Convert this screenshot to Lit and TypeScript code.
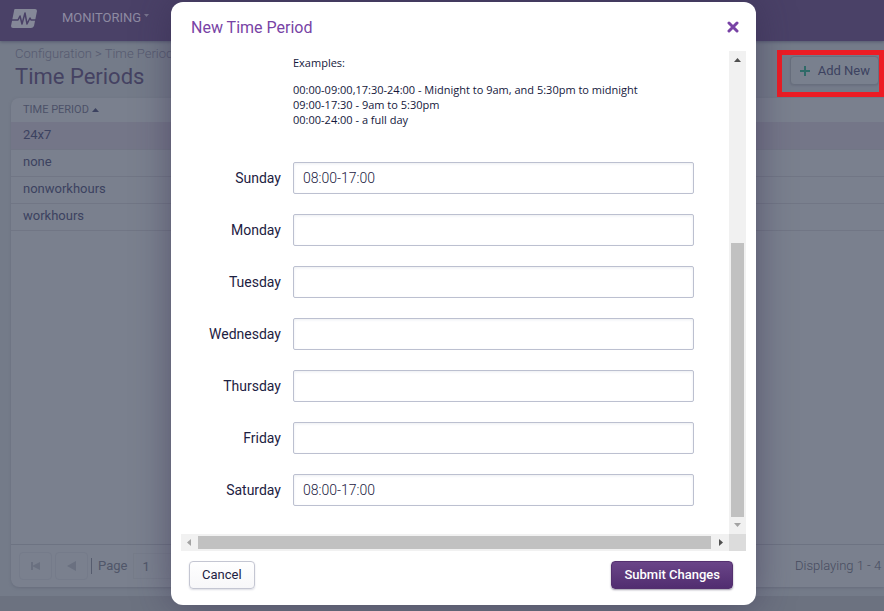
import { LitElement, html, css } from "lit";
import { customElement, state } from "lit/decorators.js";

@customElement("periods-page")
class PeriodsPage extends LitElement {
  static styles = css`
    :host {
      display: flex;
      flex-direction: column;
      min-height: 100vh;
      overflow: hidden;
      background: #6c7280;
      color: #3c4260;
      font: 13px/16px Roboto, sans-serif;
    }
    * { box-sizing: border-box; }
    button { font: inherit; color: inherit; }
    .bar {
      display: flex;
      align-items: center;
      gap: 24px;
      height: 41px;
      padding: 0 10px 4px;
      background: #4a4167;
      box-shadow: 0 1px 3px #555b70;
      z-index: 1;
    }
    .logo { display: block; width: 28px; height: 20px; }
    .menu {
      display: flex;
      gap: 3px;
      color: #8e8ba2;
      text-decoration: none;
      line-height: 18px;
      height: 20px;
    }
    .menu svg { margin-top: 4px; }
    .main {
      flex: 1;
      display: flex;
      flex-direction: column;
      padding: 4px 0 9px 11px;
      margin-bottom: 15px;
      background: #747b89;
    }
    .head { display: flex; justify-content: space-between; height: 53px; }
    .crumbs { padding-left: 4px; line-height: 18px; font-weight: 300; color: #565a70; }
    .crumbs a { color: inherit; text-decoration: none; }
    h1 { margin: 0; padding-left: 4px; font-size: 22px; line-height: 28px; font-weight: 400; color: #454262; }
    .tools { position: relative; align-self: flex-start; padding: 11px 5px 12px 13px; }
    .tools::after {
      content: "";
      position: absolute;
      inset: 5px 0 0;
      border: 5px solid #ed1c24;
    }
    .add {
      display: flex;
      align-items: center;
      gap: 7px;
      height: 29px;
      padding: 0 8px;
      border: 1px solid #686f7e;
      border-radius: 4px;
      background: #79808e;
      box-shadow: 0 1px 2px #6a7080;
    }
    .grid {
      flex: 1;
      display: flex;
      flex-direction: column;
      border-radius: 8px 0 0 8px;
      background: #7a808e;
      box-shadow: 0 1px 3px #676d7c;
    }
    table { width: 100%; border-collapse: collapse; }
    th { height: 24px; padding: 0 12px; text-align: left; font-size: 11px; font-weight: 400; color: #4c5168; }
    th svg { margin-left: 3px; vertical-align: 1px; }
    td { height: 27px; padding: 0 12px 1px; border-bottom: 1px solid #717685; }
    tr.on td { background: #747688; }
    .pager {
      display: flex;
      align-items: center;
      gap: 3px;
      height: 43px;
      margin-top: auto;
      padding-left: 8px;
      border-top: 1px solid #6d7382;
      font-size: 13px;
      color: #505669;
    }
    .step {
      display: grid;
      place-items: center;
      width: 33px;
      height: 28px;
      padding: 0;
      border: 1px solid #757b8a;
      border-radius: 4px;
      background: none;
    }
    .page { padding: 0 3px 0 6px; border-left: 1px solid #565c6e; }
    .num {
      width: 40px;
      height: 26px;
      padding: 0 8px;
      border: 1px solid #767c8a;
      background: none;
      font: inherit;
      color: inherit;
    }
    .count { width: 89px; margin-left: auto; white-space: nowrap; font-weight: 300; overflow: hidden; color: #474c60; }
  `;
  private rows = ["24x7", "none", "nonworkhours", "workhours"];
  render() {
    return html`
      <header class="bar">
        <svg class="logo" viewBox="0 0 28 20">
          <path d="M5 0h20q2 0 2 2l-3 15q-1 2-3 2H3q-2 0-2-2L4 2q0-2 1-2z" fill="#858898" />
          <path d="M1 11h7l2-4 2 8 3-11 2 11 3-6 1 2h5" fill="none" stroke="#4a4167" stroke-width="1.500" stroke-linejoin="round" />
        </svg>
        <a class="menu" href="#monitoring">MONITORING
          <svg width="5" height="5"><path d="M0 1h5L2.500 4z" fill="#77738d" /></svg>
        </a>
      </header>
      <main class="main">
        <div class="head">
          <div>
            <nav class="crumbs"><a href="#configuration">Configuration</a> &gt; <a href="#periods">Time Periods</a></nav>
            <h1>Time Periods</h1>
          </div>
          <div class="tools">
            <button class="add">
              <svg width="12" height="12"><path d="M6 1v10M1 6h10" stroke="#2f6a68" stroke-width="2" /></svg>
              Add New
            </button>
          </div>
        </div>
        <section class="grid">
          <table>
            <thead><tr><th>TIME PERIOD<svg width="7" height="4"><path d="M0 4 3.500 0 7 4z" fill="#3c4260" /></svg></th></tr></thead>
            <tbody>${this.rows.map((r, i) => html`<tr class=${i === 0 ? "on" : ""}><td>${r}</td></tr>`)}</tbody>
          </table>
          <div class="pager">
            <button class="step" aria-label="First page">
              <svg width="10" height="10"><path d="M0 1h2v3.500L9 1v8L2 5.500V9H0z" fill="#6a7080" /></svg>
            </button>
            <button class="step" aria-label="Previous page">
              <svg width="10" height="10"><path d="M9 0v10L0 5z" fill="#6a7080" /></svg>
            </button>
            <label class="page" for="num">Page</label>
            <input class="num" id="num" value="1" />
            <span class="count">Displaying 1 - 4 of 4</span>
          </div>
        </section>
      </main>
    `;
  }
}

@customElement("period-dialog")
class PeriodDialog extends LitElement {
  static styles = css`
    :host {
      display: flex;
      flex-direction: column;
      border-radius: 12px;
      background: #fff;
      box-shadow: 0 0 36px rgba(50, 40, 75, 0.5);
      color: #1d2142;
      font: 14px/16px Roboto, sans-serif;
    }
    * { box-sizing: border-box; }
    button { font: inherit; }
    .head { display: flex; justify-content: space-between; align-items: center; height: 49px; padding: 0 17px 0 20px; }
    h2 { margin: 0; font-size: 16px; line-height: 20px; padding-top: 2px; font-weight: 400; color: #7843a5; }
    .close { display: grid; padding: 0; border: 0; background: none; }
    .view {
      flex: 1;
      display: grid;
      grid-template: minmax(0, 1fr) 17px / minmax(0, 1fr) 17px;
      margin: 0 10px;
    }
    .body { overflow: hidden; padding: 4px 35px 0 0; }
    .help { padding-left: 112px; font: 11px/15px "Open Sans", sans-serif; white-space: nowrap; color: #14183c; }
    .help p { margin: 0 0 12px; }
    form { display: grid; gap: 20px; padding-top: 35px; }
    .row { display: grid; grid-template-columns: 100px 1fr; gap: 12px; align-items: center; }
    label { text-align: right; }
    .row input {
      width: 100%;
      height: 32px;
      padding: 0 9px;
      border: 1px solid #bcc0d0;
      border-radius: 2px;
      box-shadow: inset 0 1px 3px #eceef2;
      font: 300 14px/16px Roboto, sans-serif;
      color: #1d2142;
    }
    .track { display: flex; align-items: center; background: #f1f1f1; }
    .down { flex-direction: column; }
    .track svg { flex: none; }
    .thumb { background: #c1c1c1; }
    .down .thumb { width: 13px; margin-top: auto; height: 274px; }
    .across .thumb { height: 13px; flex: 1; margin-right: 1px; }
    .corner { background: #dcdcdc; }
    .foot { display: flex; justify-content: space-between; padding: 10px 23px 16px 18px; }
    .foot button { height: 28px; padding: 0 12px; border-radius: 4px; font-size: 13px; }
    .cancel { border: 1px solid #c4c6d2; background: linear-gradient(#fff, #f7f7f9); color: #1d2142; box-shadow: 0 1px 2px #dcdde4; }
    .submit { border: 1px solid #54306f; background: linear-gradient(#6a4588, #512d70); color: #fff; font-weight: 500; box-shadow: 0 1px 2px #9c98a8; }
  `;
  @state() private hours: Array<[string, string]> = [
    ["Sunday", "08:00-17:00"],
    ["Monday", ""],
    ["Tuesday", ""],
    ["Wednesday", ""],
    ["Thursday", ""],
    ["Friday", ""],
    ["Saturday", "08:00-17:00"],
  ];
  render() {
    return html`
      <div class="head">
        <h2>New Time Period</h2>
        <button class="close" aria-label="Close">
          <svg width="12" height="12"><path d="M2 2l8 8M10 2l-8 8" stroke="#7843a5" stroke-width="3" stroke-linecap="round" /></svg>
        </button>
      </div>
      <div class="view">
        <div class="body">
          <div class="help">
            <p>Examples:</p>
            00:00-09:00,17:30-24:00 - Midnight to 9am, and 5:30pm to midnight<br />
            09:00-17:30 - 9am to 5:30pm<br />
            00:00-24:00 - a full day
          </div>
          <form id="hours">
            ${this.hours.map(([day, value]) => html`
              <div class="row">
                <label for=${day}>${day}</label>
                <input id=${day} .value=${value} />
              </div>`)}
          </form>
        </div>
        <div class="track down">
          <svg width="17" height="17"><path d="M5 11 8.500 7 12 11z" fill="#505050" /></svg>
          <div class="thumb"></div>
          <svg width="17" height="17"><path d="M5 6h7L8.500 10z" fill="#a3a3a3" /></svg>
        </div>
        <div class="track across">
          <svg width="17" height="17"><path d="M10 5v7L6 8.500z" fill="#a3a3a3" /></svg>
          <div class="thumb"></div>
          <svg width="17" height="17"><path d="M7 5v7l4-3.500z" fill="#505050" /></svg>
        </div>
        <div class="corner"></div>
      </div>
      <div class="foot">
        <button class="cancel">Cancel</button>
        <button class="submit" form="hours">Submit Changes</button>
      </div>
    `;
  }
}

@customElement("app-root")
class AppRoot extends LitElement {
  static styles = css`
    :host { display: block; position: relative; overflow: hidden; }
    .layer { position: absolute; inset: 0; z-index: 2; display: grid; padding: 2px 128px 6px 171px; }
  `;
  render() {
    return html`
      <periods-page></periods-page>
      <div class="layer"><period-dialog role="dialog" aria-label="New Time Period"></period-dialog></div>
    `;
  }
}
